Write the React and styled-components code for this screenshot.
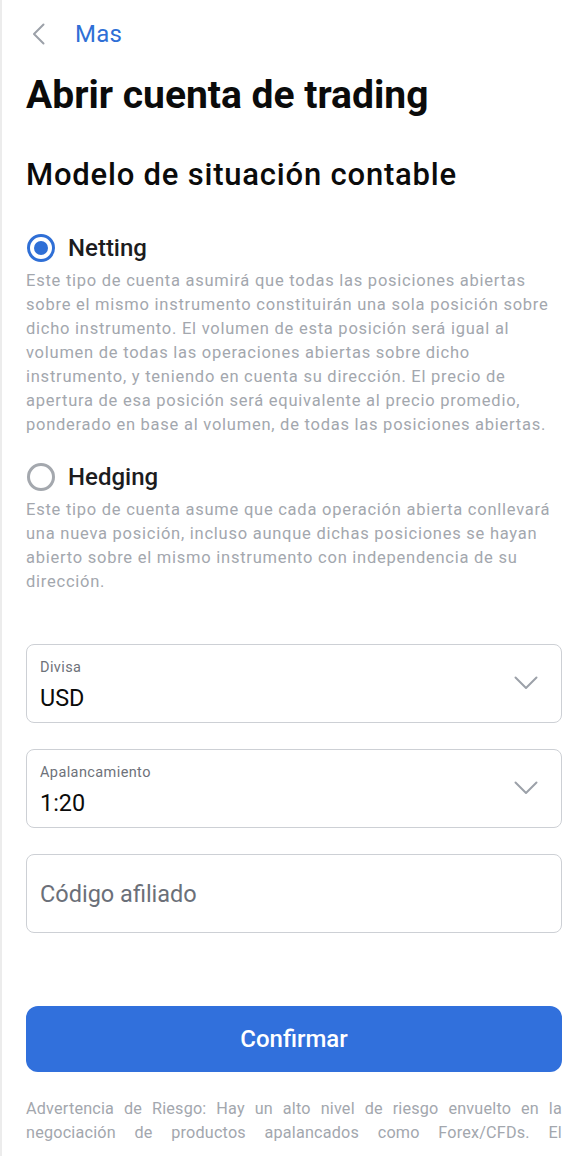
import React, { useState } from 'react';
import styled, { createGlobalStyle } from 'styled-components';

const GlobalStyle = createGlobalStyle`
    html, body {
        margin: 0;
        padding: 0;
        background: #ffffff;
    }

    body {
        font-family: Roboto, "Noto Sans", Arial, sans-serif;
        overflow: hidden;
    }

    * {
        box-sizing: border-box;
    }
`;

const Page = styled.div`
    min-height: 1156px;
    border-left: 2px solid #ececec;
    padding: 0 18px 0 24px;
`;

const TopBar = styled.div`
    display: flex;
    align-items: center;
    height: 68px;
`;

const BackButton = styled.button`
    display: flex;
    align-items: center;
    gap: 30px;
    border: 0;
    background: none;
    padding: 0 0 0 6px;
    cursor: pointer;
    color: #2f6fd6;
    font-family: inherit;
    font-size: 24px;
    letter-spacing: 0.2px;
`;

const PageTitle = styled.h1`
    margin: 4px 0 0;
    font-size: 39px;
    line-height: 46px;
    font-weight: 700;
    color: #0b0b0b;
`;

const SectionTitle = styled.h2`
    margin: 37px 0 0;
    font-size: 31px;
    line-height: 40px;
    font-weight: 500;
    letter-spacing: 0.8px;
    color: #0b0b0b;
`;

const Options = styled.div`
    margin-top: 38px;
    display: flex;
    flex-direction: column;
    gap: 25px;
`;

const OptionHead = styled.label`
    display: flex;
    align-items: center;
    gap: 13px;
    cursor: pointer;
    font-size: 24px;
    line-height: 30px;
    font-weight: 500;
    color: #1c1c1e;
    height: 30px;
`;

const RadioCircle = styled.span`
    width: 28px;
    height: 28px;
    margin-left: 1px;
    border-radius: 50%;
    border: 3px solid ${p => (p.$checked ? '#2f6fd6' : '#a4a8ae')};
    display: flex;
    align-items: center;
    justify-content: center;

    &::after {
        content: '';
        display: ${p => (p.$checked ? 'block' : 'none')};
        width: 14px;
        height: 14px;
        border-radius: 50%;
        background: #2f6fd6;
    }
`;

const OptionText = styled.p`
    margin: 6px 0 0;
    font-size: 16.5px;
    line-height: 24px;
    letter-spacing: 0.75px;
    color: #a3a7ae;
`;

const Fields = styled.div`
    margin-top: 50px;
    display: flex;
    flex-direction: column;
    gap: 26px;
`;

const Field = styled.div`
    position: relative;
    height: 79px;
    border: 1px solid #cdd0d5;
    border-radius: 8px;
    padding: 13px 50px 0 13px;
    display: flex;
    flex-direction: column;
    justify-content: ${p => (p.$placeholder ? 'center' : 'flex-start')};
`;

const FieldLabel = styled.span`
    font-size: 14.5px;
    line-height: 20px;
    letter-spacing: 0.4px;
    color: #6e727a;
`;

const FieldValue = styled.span`
    margin-top: 6px;
    font-size: 23.4px;
    line-height: 28px;
    color: #0b0b0b;
`;

const Placeholder = styled.span`
    margin-top: -13px;
    font-size: 23.5px;
    line-height: 28px;
    color: #6b7079;
`;

const Chevron = styled.svg`
    position: absolute;
    right: 23px;
    top: 31px;
`;

const ConfirmButton = styled.button`
    margin-top: 73px;
    width: 100%;
    height: 66px;
    border: 0;
    border-radius: 12px;
    background: #3170dc;
    color: #ffffff;
    font-family: inherit;
    font-size: 24px;
    font-weight: 500;
    cursor: pointer;
`;

const Warning = styled.p`
    margin: 25px 0 0;
    font-size: 16.2px;
    line-height: 24px;
    letter-spacing: 0.2px;
    color: #a3a7ae;
    text-align: justify;
    text-align-last: justify;
`;

const options = [
    {
        id: 'netting',
        name: 'Netting',
        text: 'Este tipo de cuenta asumirá que todas las posiciones abiertas sobre el mismo instrumento constituirán una sola posición sobre dicho instrumento. El volumen de esta posición será igual al volumen de todas las operaciones abiertas sobre dicho instrumento, y teniendo en cuenta su dirección. El precio de apertura de esa posición será equivalente al precio promedio, ponderado en base al volumen, de todas las posiciones abiertas.',
    },
    {
        id: 'hedging',
        name: 'Hedging',
        text: 'Este tipo de cuenta asume que cada operación abierta conllevará una nueva posición, incluso aunque dichas posiciones se hayan abierto sobre el mismo instrumento con independencia de su dirección.',
    },
];

const DownArrow = () => (
    <Chevron width="24" height="14" viewBox="0 0 24 14">
        <path d="M1.5 1.5 L12 12 L22.5 1.5" fill="none" stroke="#9ca1a9" strokeWidth="2" strokeLinecap="round" strokeLinejoin="round" />
    </Chevron>
);

export default function App() {
    const [model, setModel] = useState('netting');

    return (
        <Page>
            <GlobalStyle />

            <TopBar>
                <BackButton>
                    <svg width="13" height="22" viewBox="0 0 13 22">
                        <path d="M11.5 1.5 L2 11 L11.5 20.5" fill="none" stroke="#9ca1a9" strokeWidth="2" strokeLinecap="round" strokeLinejoin="round" />
                    </svg>
                    Mas
                </BackButton>
            </TopBar>

            <PageTitle>Abrir cuenta de trading</PageTitle>
            <SectionTitle>Modelo de situación contable</SectionTitle>

            <Options>
                {options.map(option => (
                    <div key={option.id}>
                        <OptionHead onClick={() => setModel(option.id)}>
                            <RadioCircle $checked={model === option.id} />
                            {option.name}
                        </OptionHead>
                        <OptionText>{option.text}</OptionText>
                    </div>
                ))}
            </Options>

            <Fields>
                <Field>
                    <FieldLabel>Divisa</FieldLabel>
                    <FieldValue>USD</FieldValue>
                    <DownArrow />
                </Field>
                <Field>
                    <FieldLabel>Apalancamiento</FieldLabel>
                    <FieldValue>1:20</FieldValue>
                    <DownArrow />
                </Field>
                <Field $placeholder>
                    <Placeholder>Código afiliado</Placeholder>
                </Field>
            </Fields>

            <ConfirmButton>Confirmar</ConfirmButton>

            {/* only the part that is visible on screen */}
            <Warning>
                Advertencia de Riesgo: Hay un alto nivel de riesgo envuelto en la negociación de productos apalancados como Forex/CFDs. El
            </Warning>
        </Page>
    );
}
